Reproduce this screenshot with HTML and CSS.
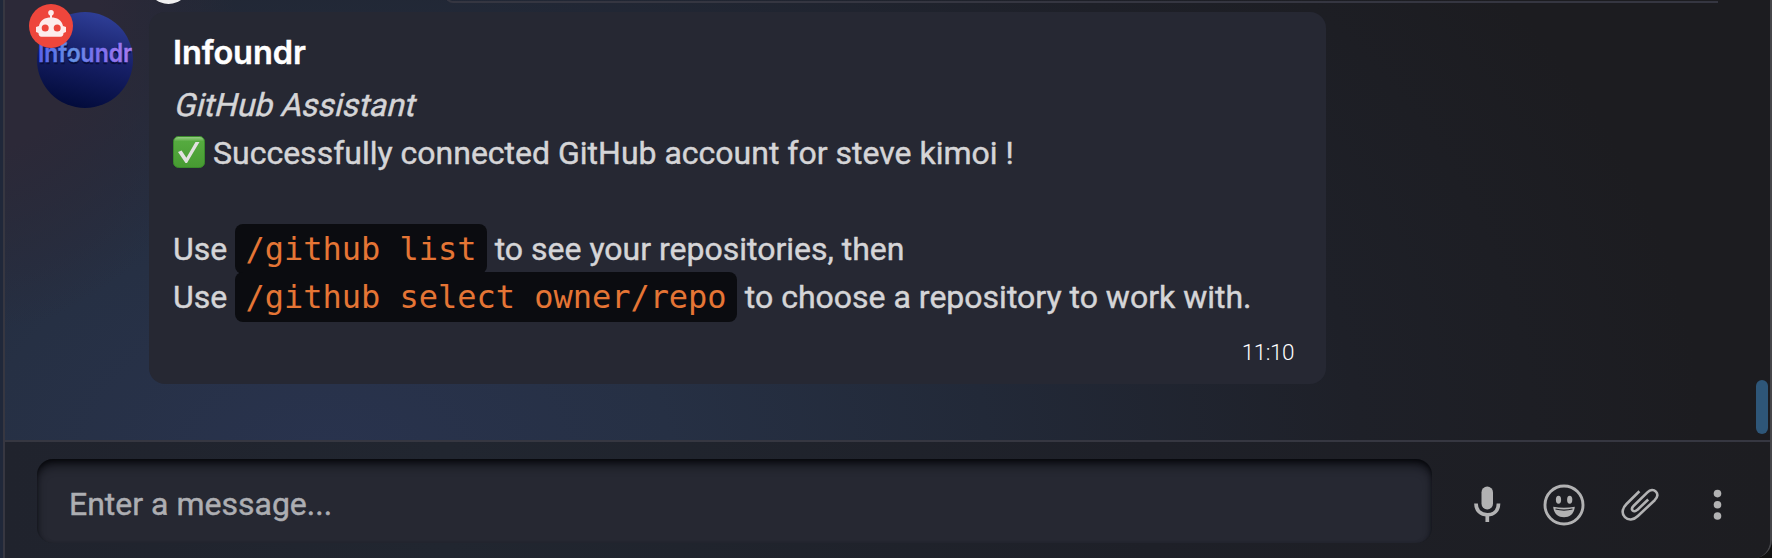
FILE: index.html
```
<!DOCTYPE html>
<html lang="en">
<head>
<meta charset="utf-8">
<title>Chat</title>
<link rel="stylesheet" href="styles.css">
</head>
<body>
<div class="window">
  <main class="messages">
    <span class="prev-avatar"></span>
    <span class="prev-card"></span>
    <div class="avatar">
      <svg class="avatar-image" viewBox="0 0 96 96" width="96" height="96">
        <defs>
          <linearGradient id="sky" x1=".65" y1="0" x2=".4" y2="1"><stop offset="0" stop-color="#2f3f98"/><stop offset=".45" stop-color="#18216a"/><stop offset="1" stop-color="#020b3a"/></linearGradient>
          <linearGradient id="word" x1="0" x2="1"><stop offset="0" stop-color="#5960ec"/><stop offset=".38" stop-color="#6694e4"/><stop offset=".6" stop-color="#7770ee"/><stop offset="1" stop-color="#a77aed"/></linearGradient>
        </defs>
        <circle cx="48" cy="48" r="48" fill="url(#sky)"/>
        <text class="logo-shadow" x="2" y="52" textLength="92" lengthAdjust="spacingAndGlyphs" aria-hidden="true">Infoundr</text>
        <text class="logo-text" x="1" y="50" textLength="94" lengthAdjust="spacingAndGlyphs">Infoundr</text>
        <path d="M30 46q5 0 8-5" fill="none" stroke="#151e61" stroke-width="2"/>
      </svg>
      <span class="bot-badge">
        <svg viewBox="0 0 44 44" width="44" height="44" fill="#fdecec">
          <circle cx="22" cy="8.700" r="2.800"/><path d="M21 9h2v7h-2z"/>
          <path fill-rule="evenodd" d="M10 22c1-6 6-8.500 12-8.500S33 16 34 22l3 1v5l-2.500 1c0 2-1 3.800-3 3.800h-19c-2 0-3-1.800-3-3.800L7 28v-5zM16.200 20.500a3.500 3.500 0 1 0 0 7 3.500 3.500 0 0 0 0-7zm12 0a3.500 3.500 0 1 0 0 7 3.500 3.500 0 0 0 0-7z"/>
        </svg>
      </span>
    </div>
    <article class="bubble">
      <h2 class="sender">Infoundr</h2>
      <div class="body"><em class="role">GitHub Assistant</em><br><svg class="check" viewBox="0 0 32 32" width="32" height="32"><defs><linearGradient id="green" x2="0" y2="1"><stop offset="0" stop-color="#9ed18c"/><stop offset=".16" stop-color="#55aa3f"/><stop offset="1" stop-color="#479b32"/></linearGradient></defs><rect x=".5" y=".5" width="31" height="31" rx="5" fill="url(#green)" stroke="#398a2b"/><path d="M5 16l3.600-1.500 4.800 7.300L22.500 6h4L14 27h-1.500z" fill="#e1e1df"/></svg><span class="after-check">Successfully connected GitHub account for steve kimoi !</span><br><br>Use <code>/github list</code> to see your repositories, then<br>Use <code>/github select owner/repo</code> to choose a repository to work with.</div>
      <time class="time">11:10</time>
    </article>
    <span class="scrollbar"></span>
  </main>
  <footer class="composer">
    <div class="field">Enter a message...</div>
    <div class="actions">
      <svg viewBox="0 0 44 44" width="44" height="44"><rect x="16.500" y="3.500" width="11.500" height="23" rx="5.700" fill="#b2b2b3"/><path d="M11 20.500c0 7 4.600 11.300 11.300 11.300S33.500 27.500 33.500 20.500M22.300 32v7" fill="none" stroke="#b2b2b3" stroke-width="3.700"/></svg>
      <svg viewBox="0 0 44 44" width="44" height="44"><circle cx="22" cy="22" r="19" fill="none" stroke="#b2b2b3" stroke-width="2.900"/><ellipse cx="16.500" cy="16.800" rx="2.600" ry="4" fill="#b2b2b3"/><ellipse cx="27.700" cy="16.800" rx="2.600" ry="4" fill="#b2b2b3"/><path d="M11.200 23.800q10.800 1.700 21.600 0c-.7 7-4.900 10.400-10.800 10.400s-10.100-3.400-10.800-10.400z" fill="#b2b2b3"/><path d="M13.500 26q8.500 2.200 17 0" fill="none" stroke="#1d1e23" stroke-width="1.200"/></svg>
      <svg viewBox="0 0 44 44" width="44" height="44" fill="none" stroke="#b2b2b3" stroke-width="2.600"><path d="M20.400 8.300L7.500 21c-4.800 4.800-4.800 10-1.600 13.200s8.500 3.200 13-1.200L35.700 17.200c3.200-3.200 3.400-6.300 1.200-8.500s-5.600-2.200-8.500.7L14.700 22.700c-2 2-2.100 3.800-1 4.900s2.900 1 4.800-.9l10.700-10.200"/></svg>
      <svg viewBox="0 0 44 44" width="44" height="44" fill="#b2b2b3"><circle cx="21.500" cy="10.600" r="3.800"/><circle cx="21.500" cy="21.800" r="3.800"/><circle cx="21.500" cy="33" r="3.800"/></svg>
    </div>
  </footer>
</div>
</body>
</html>
```
FILE: styles.css
```
* { box-sizing: border-box; }
body {
  margin: 0;
  height: 558px;
  overflow: hidden;
  background: linear-gradient(90deg, #20283a 3px, #111 4px);
  font-family: Roboto, sans-serif;
  font-size: 32px;
}
.window {
  display: flex;
  flex-direction: column;
  height: 558px;
  margin-left: 3px;
  overflow: hidden;
  border-left: 2px solid #373741;
  border-right: 2px solid #46464a;
  border-bottom-right-radius: 18px;
  background:
    radial-gradient(ellipse 250px 330px at -20px 0, #2c2938 0 45%, #2c293800 100%),
    radial-gradient(ellipse 1380px 900px at 320px 460px, #29334e 0, #263044 25%, #222938 48%, #1e2028 75%, #1c1c20 100%);
}
.messages {
  position: relative;
  display: flex;
  align-items: flex-start;
  height: 440px;
  padding: 12px 0 0 32px;
}
.prev-avatar {
  position: absolute;
  left: 142px;
  top: -39px;
  width: 43px;
  height: 43px;
  border-radius: 50%;
  background: #f0f0f0;
}
.prev-card {
  position: absolute;
  left: 440px;
  top: -17px;
  width: 1273px;
  height: 20px;
  border: 2px solid #353641;
  border-width: 0 0 2px 2px;
  border-bottom-left-radius: 8px;
}
.avatar { position: relative; width: 96px; height: 96px; margin-right: 16px; flex: none; }
.avatar-image { display: block; overflow: visible; }
.logo-text, .logo-shadow { font: 600 25px Inter, sans-serif; fill: url(#word); stroke: url(#word); stroke-width: .4px; }
.logo-shadow { fill: #080e3b; stroke: #080e3b; }
.bot-badge {
  position: absolute;
  left: -8px;
  top: -8px;
  width: 44px;
  height: 44px;
  border-radius: 50%;
  background: #ee463c;
}
.bot-badge svg { display: block; }
.bubble {
  display: flex;
  flex-direction: column;
  width: 1177px;
  height: 372px;
  padding: 16px 32px 16px 24px;
  border-radius: 16px;
  background: #262833;
  color: #d5d5d7;
}
.sender {
  margin: 0;
  height: 53px;
  font: 600 32.500px/49px Inter, sans-serif;
  letter-spacing: -.1px;
  color: #fff;
  -webkit-text-stroke: .4px currentColor;
}
.body { line-height: 48px; white-space: nowrap; -webkit-text-stroke: .45px currentColor; }
.role { display: inline-block; height: 48px; margin-left: 3px; vertical-align: top; font-style: normal; transform: skewX(-14deg); }
.check { vertical-align: -4px; margin-right: 8px; }
code {
  padding: 6px 10.300px;
  border-radius: 8px;
  background: #0b0c10;
  color: #e57535;
  font: 32px "DejaVu Sans Mono", monospace;
  letter-spacing: -.02px;
  -webkit-text-stroke: 0;
}
.time { align-self: flex-end; margin-top: 15px; font-size: 22.500px; line-height: 32px; font-weight: 300; letter-spacing: -.5px; color: #fff; }
.scrollbar {
  position: absolute;
  right: 2px;
  top: 380px;
  width: 12px;
  height: 54px;
  border-radius: 6px;
  background: #2e5678;
}
.composer {
  display: flex;
  align-items: flex-start;
  flex: 1;
  padding: 17px 29px 0 32px;
  border-top: 2px solid #363741;
  background: linear-gradient(90deg, #20232d, #212630 25%, #1e2028 65%, #1d1d21);
}
.field {
  width: 1395px;
  height: 84px;
  padding: 0 32px;
  border-radius: 16px;
  background: #262832;
  box-shadow: inset 0 8px 12px -4px #05060a, inset 0 2px 5px -1px #0c0d12;
  line-height: 90px;
  color: #adaeb2;
  -webkit-text-stroke: .45px currentColor;
}
.actions { display: flex; gap: 33px; margin: 24px 0 0 33px; }
```
